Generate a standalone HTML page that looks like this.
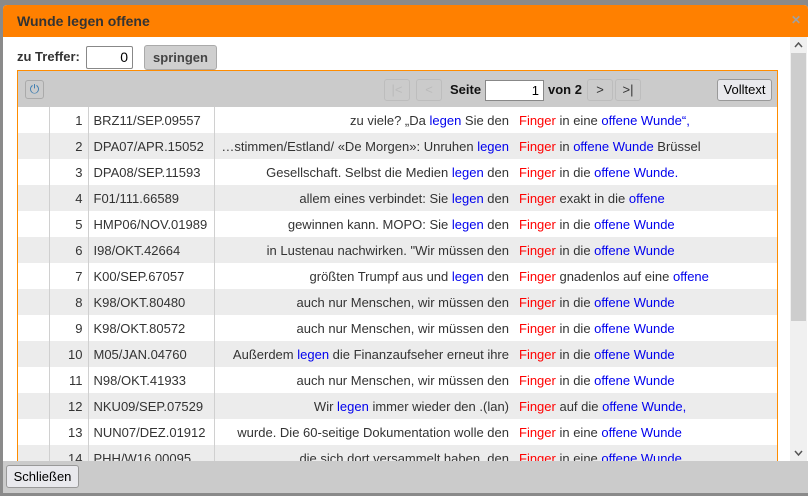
<!DOCTYPE html>
<html><head><meta charset="utf-8"><style>
*{box-sizing:border-box}
body{margin:0;width:808px;height:496px;overflow:hidden;background:#8a8a8a;font-family:"Liberation Sans",Arial,sans-serif;font-size:13px;color:#333;position:relative}
.dlg{position:absolute;left:3px;top:5px;width:805px;height:488px;background:#fff;border-radius:4px 4px 0 0;overflow:hidden}
.title{height:32px;background:#ff8000;color:#333;font-weight:bold;font-size:14px;line-height:32px;padding-left:14px}
.x{position:absolute;right:7px;top:8px;color:#a0a0a0;font-size:12px;font-weight:bold}
.sb{position:absolute;left:787px;top:32px;width:17px;height:424px;background:#f0f0f0}
.thumb{position:absolute;left:1px;top:16px;width:15px;height:268px;background:#cdcdcd}
.foot{position:absolute;left:0;top:456px;width:805px;height:32px;background:#cbcbcb}
.btn{position:absolute;border:1px solid #999;border-radius:3px;background:#e9e9ed;color:#000;font-size:13px;text-align:center}
.grid{position:absolute;left:14px;top:65px;width:761px;height:391px;border:1px solid #ff8c00;border-bottom:none;overflow:hidden}
.hdr{height:36px;background:#cbcbcb;position:relative}
table{border-collapse:collapse;width:759px;table-layout:fixed}
td{height:26px;padding:0 5px;white-space:nowrap;overflow:hidden;border-right:1px solid #d0d0d0}
tr:nth-child(even) td{background:#ececec}
.r{text-align:right}
.b{color:#0000ee}.f{color:#f00}
td.k{border-right:none}
td.c{border-right:none}
.pb{position:absolute;top:8px;height:22px;width:26px;border:1px solid #bdbdbd;border-radius:3px;background:#cbcbcb;color:#999;text-align:center;line-height:20px}
</style></head><body>
<div class="dlg">
<div class="title">Wunde legen offene</div><div class="x">✕</div>
<div style="position:absolute;left:14px;top:44px;font-weight:bold;font-size:13px">zu Treffer:</div>
<div style="position:absolute;left:83px;top:41px;width:47px;height:23px;border:1px solid #888;border-radius:2px;text-align:right;padding-right:4px;line-height:21px;color:#000;font-size:14px">0</div>
<div class="btn" style="left:141px;top:40px;width:73px;height:25px;line-height:23px;font-weight:bold;background:#cfcfcf;color:#444;border-color:#aaa">springen</div>
<div class="grid">
<div class="hdr">
<div style="position:absolute;left:7px;top:9px;width:19px;height:19px;border:1px solid #aaa;border-radius:3px;color:#3a7bb0;font-size:12px;line-height:17px;text-align:center">⏻</div>
<div class="pb" style="left:366px;color:#bbb">|&lt;</div>
<div class="pb" style="left:398px;color:#bbb">&lt;</div>
<div style="position:absolute;left:432px;top:11px;font-weight:bold;color:#111">Seite</div>
<div style="position:absolute;left:467px;top:9px;width:59px;height:21px;background:#fff;border:1px solid #888;text-align:right;padding-right:4px;line-height:19px;color:#000">1</div>
<div style="position:absolute;left:530px;top:11px;font-weight:bold;color:#111">von 2</div>
<div class="pb" style="left:569px;color:#333">&gt;</div>
<div class="pb" style="left:597px;color:#333">&gt;|</div>
<div class="btn" style="left:699px;top:8px;width:55px;height:22px;line-height:20px">Volltext</div>
</div>
<table>
<colgroup><col style="width:31px"><col style="width:39px"><col style="width:126px"><col style="width:300px"><col></colgroup>
<tr><td></td><td class="r">1</td><td>BRZ11/SEP.09557</td><td class="r c">zu viele? „Da <span class="b">legen</span> Sie den</td><td class="k"><span class="f">Finger</span> in eine <span class="b">offene Wunde“,</span></td></tr>
<tr><td></td><td class="r">2</td><td>DPA07/APR.15052</td><td class="r c">…stimmen/Estland/ «De Morgen»: Unruhen <span class="b">legen</span></td><td class="k"><span class="f">Finger</span> in <span class="b">offene Wunde</span> Brüssel</td></tr>
<tr><td></td><td class="r">3</td><td>DPA08/SEP.11593</td><td class="r c">Gesellschaft. Selbst die Medien <span class="b">legen</span> den</td><td class="k"><span class="f">Finger</span> in die <span class="b">offene Wunde.</span></td></tr>
<tr><td></td><td class="r">4</td><td>F01/111.66589</td><td class="r c">allem eines verbindet: Sie <span class="b">legen</span> den</td><td class="k"><span class="f">Finger</span> exakt in die <span class="b">offene</span></td></tr>
<tr><td></td><td class="r">5</td><td>HMP06/NOV.01989</td><td class="r c">gewinnen kann. MOPO: Sie <span class="b">legen</span> den</td><td class="k"><span class="f">Finger</span> in die <span class="b">offene Wunde</span></td></tr>
<tr><td></td><td class="r">6</td><td>I98/OKT.42664</td><td class="r c">in Lustenau nachwirken. "Wir müssen den</td><td class="k"><span class="f">Finger</span> in die <span class="b">offene Wunde</span></td></tr>
<tr><td></td><td class="r">7</td><td>K00/SEP.67057</td><td class="r c">größten Trumpf aus und <span class="b">legen</span> den</td><td class="k"><span class="f">Finger</span> gnadenlos auf eine <span class="b">offene</span></td></tr>
<tr><td></td><td class="r">8</td><td>K98/OKT.80480</td><td class="r c">auch nur Menschen, wir müssen den</td><td class="k"><span class="f">Finger</span> in die <span class="b">offene Wunde</span></td></tr>
<tr><td></td><td class="r">9</td><td>K98/OKT.80572</td><td class="r c">auch nur Menschen, wir müssen den</td><td class="k"><span class="f">Finger</span> in die <span class="b">offene Wunde</span></td></tr>
<tr><td></td><td class="r">10</td><td>M05/JAN.04760</td><td class="r c">Außerdem <span class="b">legen</span> die Finanzaufseher erneut ihre</td><td class="k"><span class="f">Finger</span> in die <span class="b">offene Wunde</span></td></tr>
<tr><td></td><td class="r">11</td><td>N98/OKT.41933</td><td class="r c">auch nur Menschen, wir müssen den</td><td class="k"><span class="f">Finger</span> in die <span class="b">offene Wunde</span></td></tr>
<tr><td></td><td class="r">12</td><td>NKU09/SEP.07529</td><td class="r c">Wir <span class="b">legen</span> immer wieder den .(lan)</td><td class="k"><span class="f">Finger</span> auf die <span class="b">offene Wunde,</span></td></tr>
<tr><td></td><td class="r">13</td><td>NUN07/DEZ.01912</td><td class="r c">wurde. Die 60-seitige Dokumentation wolle den</td><td class="k"><span class="f">Finger</span> in eine <span class="b">offene Wunde</span></td></tr>
<tr><td></td><td class="r">14</td><td>PHH/W16.00095</td><td class="r c">die sich dort versammelt haben, den</td><td class="k"><span class="f">Finger</span> in eine <span class="b">offene Wunde</span></td></tr>
</table>
</div>
<div class="sb"><svg width="17" height="16" style="position:absolute;top:0"><path d="M5 10 L8.5 6 L12 10" stroke="#555" stroke-width="1.5" fill="none"/></svg><div class="thumb"></div><svg width="17" height="16" style="position:absolute;bottom:0"><path d="M5 6 L8.5 10 L12 6" stroke="#555" stroke-width="1.5" fill="none"/></svg></div>
<div class="foot"><div class="btn" style="left:3px;top:4px;width:73px;height:23px;line-height:21px">Schließen</div></div>
</div>
</body></html>
